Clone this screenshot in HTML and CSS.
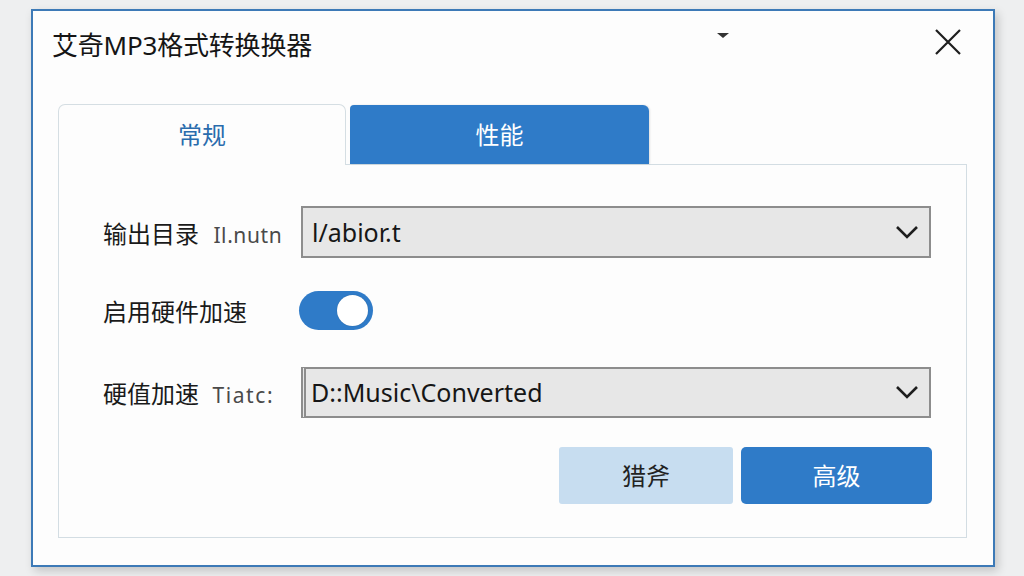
FILE: index.html
```html
<!DOCTYPE html>
<html lang="zh-CN">
<head>
<meta charset="utf-8">
<title>艾奇MP3格式转换换器</title>
<link rel="stylesheet" href="styles.css">
</head>
<body>
<div class="window">
  <div class="titlebar">
    <div class="title">艾奇MP3格式转换换器</div>
    <div class="caret"></div>
    <div class="close">
      <svg width="26" height="26" viewBox="0 0 26 26"><path d="M1 1 L25 25 M25 1 L1 25" stroke="#1e1e1e" stroke-width="2.2" fill="none"/></svg>
    </div>
  </div>
  <div class="tabs">
    <div class="tab tab-active">常规</div>
    <div class="tab tab-blue">性能</div>
  </div>
  <div class="panel">
    <div class="row row-select">
      <div class="label">输出目录 <span class="hint">Il.nutn</span></div>
      <div class="select">
        <span class="value">l/abior.t</span>
        <svg class="chev" width="24" height="14" viewBox="0 0 24 14"><polyline points="2,2 12,12 22,2" stroke="#1e1e1e" stroke-width="2.6" fill="none"/></svg>
      </div>
    </div>
    <div class="row row-toggle">
      <div class="label">启用硬件加速</div>
      <div class="toggle"><div class="knob"></div></div>
    </div>
    <div class="row row-select">
      <div class="label">硬值加速 <span class="hint hint-wide">Tiatc:</span></div>
      <div class="select select-double">
        <span class="value">D::Music\Converted</span>
        <svg class="chev" width="24" height="14" viewBox="0 0 24 14"><polyline points="2,2 12,12 22,2" stroke="#1e1e1e" stroke-width="2.6" fill="none"/></svg>
      </div>
    </div>
    <div class="buttons">
      <div class="btn btn-light">猎斧</div>
      <div class="btn btn-primary">高级</div>
    </div>
  </div>
</div>
</body>
</html>
```

FILE: styles.css
```css
html, body {
  margin: 0;
  padding: 0;
}
body {
  width: 1024px;
  height: 576px;
  background: #eeeff0;
  font-family: "Noto Sans", "Noto Sans CJK SC", sans-serif;
  color: #1e1e1e;
  overflow: hidden;
}
.window {
  box-sizing: border-box;
  margin: 9px 0 0 31px;
  width: 964px;
  height: 558px;
  border: 2px solid #3d7ab7;
  background: #fdfdfd;
  box-shadow: 3px 4px 9px rgba(0, 0, 0, 0.18);
  display: flex;
  flex-direction: column;
}
.titlebar {
  height: 66px;
  display: flex;
  align-items: center;
  padding-left: 19px;
  padding-right: 32px;
}
.title {
  font-size: 26px;
  font-family: "Noto Sans", "Noto Sans CJK SC", sans-serif;
  color: #151515;
  letter-spacing: -0.2px;
}
.caret {
  margin-left: 405px;
  margin-top: -18px;
  width: 0;
  height: 0;
  border-left: 6px solid transparent;
  border-right: 6px solid transparent;
  border-top: 5px solid #333;
}
.close {
  margin-left: auto;
  width: 26px;
  height: 26px;
  margin-top: -5px;
}
.close svg { display: block; }
.tabs {
  margin-top: 27px;
  margin-left: 25px;
  display: flex;
  align-items: flex-end;
  gap: 4px;
  height: 61px;
  position: relative;
  z-index: 1;
}
.tab {
  box-sizing: border-box;
  display: flex;
  align-items: center;
  justify-content: center;
  font-size: 24px;
  font-family: "Noto Sans CJK SC", sans-serif;
  padding-bottom: 3px;
}
.tab-active {
  width: 288px;
  height: 61px;
  background: #fdfdfd;
  border: 1px solid #d5dee3;
  border-bottom: none;
  border-radius: 7px 7px 0 0;
  color: #2a6cad;
}
.tab-blue {
  width: 299px;
  height: 59px;
  margin-bottom: 1px;
  background: #2f7bc8;
  color: #ffffff;
  border-radius: 4px 6px 0 0;
  box-shadow: 1px 0 2px rgba(0, 0, 0, 0.12);
}
.panel {
  box-sizing: border-box;
  margin: -1px 26px 0 25px;
  height: 374px;
  border: 1px solid #d3dde3;
  padding: 41px 35px 0 44px;
  display: flex;
  flex-direction: column;
}
.row {
  display: flex;
  align-items: center;
}
.row-select { height: 52px; }
.row-toggle { height: 108px; padding-bottom: 3px; box-sizing: border-box; }
.label {
  width: 198px;
  flex: none;
  font-size: 24px;
  font-family: "Noto Sans CJK SC", sans-serif;
  color: #1a1a1a;
  white-space: nowrap;
}
.hint {
  font-family: "Noto Sans", "Noto Sans CJK SC", sans-serif;
  font-size: 21px;
  color: #4a4a4a;
  letter-spacing: 0.6px;
  margin-left: 9px;
}
.hint-wide {
  letter-spacing: 1.6px;
  margin-left: 8px;
}
.select {
  box-sizing: border-box;
  flex: 1;
  height: 52px;
  background: #e7e7e7;
  border: 2px solid #8d8d8d;
  display: flex;
  align-items: center;
  padding: 0 10px 0 9px;
}
.select-double {
  height: 51px;
  border-left: 5px double #8d8d8d;
  padding-left: 5px;
}
.value {
  font-size: 25px;
  font-family: "Noto Sans", sans-serif;
  color: #161616;
}
.chev {
  margin-left: auto;
  display: block;
}
.toggle {
  box-sizing: border-box;
  width: 74px;
  height: 39px;
  border-radius: 20px;
  background: #2f7bc8;
  margin-left: -2px;
  display: flex;
  align-items: center;
  justify-content: flex-end;
  padding-right: 5px;
}
.knob {
  width: 31px;
  height: 31px;
  border-radius: 50%;
  background: #ffffff;
  box-shadow: 0 0 1px rgba(0, 0, 0, 0.3);
}
.buttons {
  margin-top: 29px;
  display: flex;
  justify-content: flex-end;
  gap: 8px;
  margin-right: -1px;
}
.btn {
  height: 57px;
  display: flex;
  align-items: center;
  justify-content: center;
  font-size: 24px;
  font-family: "Noto Sans CJK SC", sans-serif;
  border-radius: 3px;
  padding-bottom: 2px;
  box-sizing: border-box;
}
.btn-light {
  width: 174px;
  background: #c7ddf0;
  color: #222;
}
.btn-primary {
  width: 191px;
  background: #2f7bc8;
  color: #ffffff;
  border-radius: 5px;
}
```
